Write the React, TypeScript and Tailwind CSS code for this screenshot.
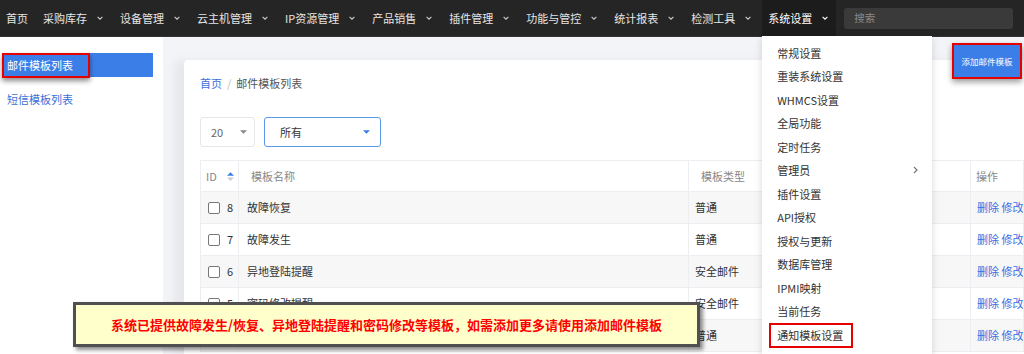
import type { FC } from 'react';

const font = 'font-["Noto_Sans_CJK_SC","Noto_Sans",sans-serif]';

const Chevron: FC<{ className?: string }> = ({ className }) => (
    <svg viewBox="0 0 10 6" className={className} fill="none" stroke="currentColor" strokeWidth="1.8">
        <path d="M1 1l4 4 4-4" />
    </svg>
);

const Caret: FC<{ color: string }> = ({ color }) => (
    <svg viewBox="0 0 8 4" className="w-[7px] h-[4px]">
        <path d="M0 0h8L4 4z" fill={color} />
    </svg>
);

const navItems = ['采购库存', '设备管理', '云主机管理', 'IP资源管理', '产品销售', '插件管理', '功能与管控', '统计报表', '检测工具'];

const menuItems = ['常规设置', '重装系统设置', 'WHMCS设置', '全局功能', '定时任务', '管理员', '插件设置', 'API授权', '授权与更新', '数据库管理', 'IPMI映射', '当前任务', '通知模板设置'];

const rows = [
    { id: 8, name: '故障恢复', type: '普通' },
    { id: 7, name: '故障发生', type: '普通' },
    { id: 6, name: '异地登陆提醒', type: '安全邮件' },
    { id: 5, name: '密码修改提醒', type: '安全邮件' },
    { id: 4, name: '账户登录通知', type: '普通' },
];

const SettingsMenu: FC = () => (
    <div className="absolute top-full left-0 w-[170px] h-[330px] bg-white shadow-[0_2px_8px_rgba(0,0,0,0.15)] pt-[5px] z-10">
        {menuItems.map((m) => (
            <div key={m} className="relative h-[23.5px] flex items-center pl-[15px] pr-[14px] text-[11px] text-[#333]">
                <span className="flex-1">{m}</span>
                {m === '管理员' && (
                    <svg viewBox="0 0 5 8" className="w-[5px] h-[8px]" fill="none" stroke="#777" strokeWidth="1.2">
                        <path d="M1 1l3 3-3 3" />
                    </svg>
                )}
                {m === '通知模板设置' && (
                    <div className="absolute left-[7px] top-0 w-[84px] h-[25px] border-2 border-[#e60000]" />
                )}
            </div>
        ))}
    </div>
);

const TopNav: FC = () => (
    <nav className="h-[37px] bg-[#252525] flex items-center text-[11px] text-[#e6e6e6] border-b border-[#333]">
        <div className="h-full flex items-center pl-[6px] pr-[6px]">首页</div>
        {navItems.map((n) => (
            <div key={n} className="h-full flex items-center pl-[6px] pr-[8px] ml-[3px]">
                {n}
                <Chevron className="w-[6px] h-[4px] ml-[10px] text-[#ccc]" />
            </div>
        ))}
        <div className="relative h-full flex items-center pl-[6px] pr-[8px] ml-[3px] bg-[#1c1c1c] text-white">
            系统设置
            <Chevron className="w-[6px] h-[4px] ml-[10px] text-white" />
            <SettingsMenu />
        </div>
        <div className="ml-[8px] w-[169px] h-[21px] rounded-[3px] bg-[#3a3a3a] flex items-center pl-[10px] text-[10.5px] text-[#8a8a8a]">
            搜索
        </div>
    </nav>
);

const Sidebar: FC = () => (
    <aside className="w-[163px] bg-white pt-[16px] text-[11px]">
        <div className="relative ml-[2px] w-[151px] h-[24px] bg-[#3c7ee8] text-white flex items-center pl-[5px]">
            邮件模板列表
            <div className="absolute left-0 top-0 w-[88px] h-[25px] border-2 border-[#e60000] shadow-[0_3px_5px_rgba(0,0,0,0.45)]" />
        </div>
        <div className="mt-[10px] h-[24px] flex items-center pl-[7px] text-[#3b6fd8]">短信模板列表</div>
    </aside>
);

const Checkbox: FC = () => <span className="w-[12px] h-[12px] border-[1.5px] border-[#777] rounded-[2px] bg-white inline-block" />;

const SortIcon: FC = () => (
    <svg viewBox="0 0 8 12" className="w-[7px] h-[11px] ml-[10px]">
        <path d="M0 5L4 1l4 4z" fill="#3c7ee8" />
        <path d="M0 7l4 4 4-4z" fill="#c8ccd2" />
    </svg>
);

const Table: FC = () => (
    <table className="mt-[13px] w-[823px] border-collapse table-fixed text-[11px]">
        <colgroup>
            <col className="w-[38px]" />
            <col className="w-[450px]" />
            <col className="w-[282px]" />
            <col className="w-[53px]" />
        </colgroup>
        <thead>
            <tr className="h-[31px] text-[#888] text-left">
                <th className="font-normal border border-[#eceef2] pl-[5px]">
                    <div className="flex items-center">ID<SortIcon /></div>
                </th>
                <th className="font-normal border border-[#eceef2] pl-[12px]">模板名称</th>
                <th className="font-normal border border-[#eceef2] pl-[12px]">模板类型</th>
                <th className="font-normal border border-[#eceef2] pl-[5px]">操作</th>
            </tr>
        </thead>
        <tbody>
            {rows.map((r, i) => (
                <tr key={r.id} className={`h-[32px] text-[#333] ${i % 2 === 0 ? 'bg-[#f7f7f7]' : 'bg-white'}`}>
                    <td className="border border-[#eceef2] pl-[7px]">
                        <div className="flex items-center gap-[7px]"><Checkbox />{r.id}</div>
                    </td>
                    <td className="border border-[#eceef2] pl-[8px]">{r.name}</td>
                    <td className="border border-[#eceef2] pl-[6px]">{r.type}</td>
                    <td className="border border-[#eceef2] pl-[6px] text-[#3d6ee0] whitespace-nowrap overflow-hidden">删除 修改</td>
                </tr>
            ))}
        </tbody>
    </table>
);

const Content: FC = () => (
    <main className="flex-1 bg-[#f3f4f8] pt-[23px] pl-[21px]">
        <section className="w-[840px] h-full bg-white rounded-tl-[4px] pl-[16px] pt-[16px] shadow-[-10px_0_10px_rgba(0,0,0,0.05)]">
            <div className="h-[14px] flex items-center text-[11px] leading-none">
                <span className="text-[#3d6ee0]">首页</span>
                <span className="mx-[5px] text-[#bbb]">/</span>
                <span className="text-[#555]">邮件模板列表</span>
            </div>
            <div className="mt-[27px] flex gap-[9px] text-[11px]">
                <div className="w-[55px] h-[30px] border border-[#e6e6e6] rounded-[3px] flex items-center justify-between pl-[10px] pr-[7px] text-[#666]">
                    20<Caret color="#888" />
                </div>
                <div className="w-[117px] h-[30px] border border-[#5b9ae6] rounded-[3px] flex items-center justify-between pl-[15px] pr-[10px] text-[#333]">
                    所有<Caret color="#3c7ee8" />
                </div>
            </div>
            <Table />
        </section>
    </main>
);

export default function App() {
    return (
        <div className={`relative w-[1024px] h-[354px] overflow-hidden bg-white ${font}`}>
            <TopNav />
            <div className="flex h-[317px]">
                <Sidebar />
                <Content />
            </div>
            <button className="absolute left-[952px] top-[43px] w-[70px] h-[36px] border-2 border-[#e60000] bg-[#3c7ee8] text-white text-[8.5px] shadow-[0_3px_6px_rgba(0,0,0,0.4)]">
                添加邮件模板
            </button>
            <div className="absolute left-[73px] top-[302px] w-[627px] h-[45px] bg-[#ffffcc] border-[3px] border-[#505050] shadow-[3px_3px_4px_rgba(0,0,0,0.45)] flex items-center justify-center">
                <span className="text-[13px] font-bold text-[#ff0000]">系统已提供故障发生/恢复、异地登陆提醒和密码修改等模板，如需添加更多请使用添加邮件模板</span>
            </div>
        </div>
    );
}
